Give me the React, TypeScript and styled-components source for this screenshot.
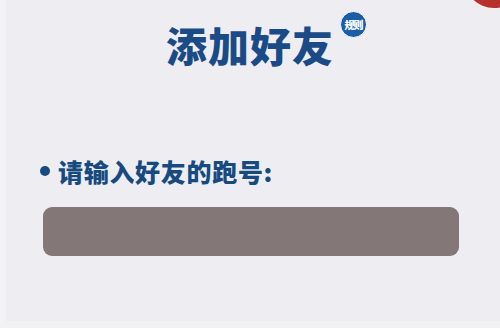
import * as React from "react";
import styled, { createGlobalStyle } from "styled-components";

const GlobalStyle = createGlobalStyle`
  html, body {
    margin: 0;
    padding: 0;
    background: #eeeef2;
  }
  body {
    font-family: "Noto Sans CJK SC", "Noto Sans", sans-serif;
  }
`;

function App() {
  return (
    <>
      <GlobalStyle />
      <Panel>
        <CloseCorner />
        <Header>
          <Title>
            添加好友
            <RuleBadge>规则</RuleBadge>
          </Title>
        </Header>
        <Field>
          <Label>
            <Bullet />
            <span>请输入好友的跑号:</span>
          </Label>
          <Input aria-label="好友的跑号" />
        </Field>
      </Panel>
    </>
  );
}

const Panel = styled.div`
  position: relative;
  width: 500px;
  height: 328px;
  box-sizing: border-box;
  overflow: hidden;
  background: #eeeef2;
  border-left: 6px solid #f3f3f5;
  border-bottom: 7px solid #f2f2f4;
  display: flex;
  flex-direction: column;
`;

const CloseCorner = styled.div`
  position: absolute;
  top: -52px;
  right: -24px;
  width: 60px;
  height: 60px;
  border-radius: 50%;
  background: #b8302d;
`;

const Header = styled.div`
  display: flex;
  justify-content: center;
  padding: 16px 6px 0 0;
`;

const Title = styled.h1`
  position: relative;
  margin: 0;
  font-size: 41px;
  line-height: 56px;
  font-weight: 900;
  letter-spacing: 1px;
  color: #1b4b87;
`;

const RuleBadge = styled.span`
  position: absolute;
  left: calc(100% + 6px);
  top: -5px;
  width: 25px;
  height: 25px;
  border-radius: 50%;
  border: 1px solid #ffffff;
  background: #1a5ea8;
  color: #ffffff;
  font-size: 10px;
  line-height: 25px;
  font-weight: 900;
  letter-spacing: -1px;
  text-align: center;
`;

const Field = styled.div`
  display: flex;
  flex-direction: column;
  gap: 19px;
  padding: 82px 41px 0 37px;
`;

const Label = styled.div`
  display: flex;
  align-items: center;
  gap: 8px;
  margin-left: -3px;
  font-size: 25px;
  line-height: 34px;
  font-weight: 900;
  letter-spacing: 0.7px;
  color: #174a80;
`;

const Bullet = styled.span`
  width: 10px;
  height: 10px;
  border-radius: 50%;
  background: #174a80;
  flex-shrink: 0;
`;

const Input = styled.div`
  height: 49px;
  border-radius: 9px;
  background: #837777;
`;

export default App;
